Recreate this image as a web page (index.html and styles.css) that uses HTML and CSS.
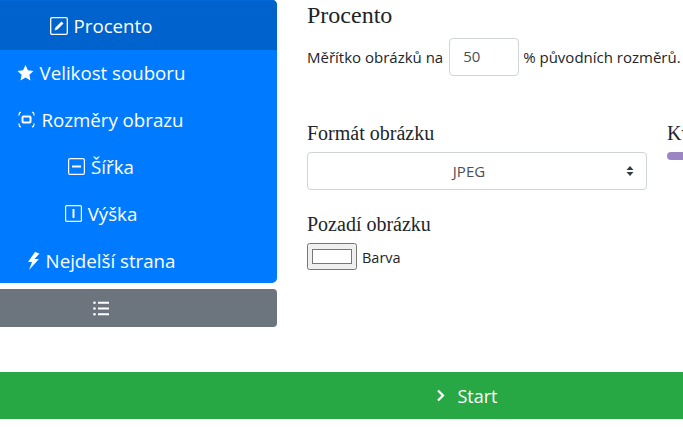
FILE: index.html
```html
<!DOCTYPE html>
<html lang="cs">
  <head>
    <meta charset="UTF-8" />
    <meta name="viewport" content="width=device-width, initial-scale=1.0" />
    <title>Procento</title>
    <link rel="stylesheet" href="styles.css">
  </head>
  <body>
    <div class="top">
      <aside class="side">
        <nav class="menu">
          <a class="item active" href="#">
            <svg class="ico" width="18" height="18" viewBox="0 0 18 18" fill="none" stroke="currentColor"><rect x=".7" y=".7" width="16.600" height="16.600" rx="1.200" stroke-width="1.300"/><path d="M4.500 13.500l1-3 6-6 2 2-6 6z" fill="currentColor" stroke="none"/></svg>
            Procento
          </a>
          <a class="item" href="#">
            <svg class="ico" width="17" height="16" viewBox="0 0 17 16" fill="currentColor"><path d="M8.500 0l2.400 5.200 5.600.7-4.100 3.900 1.100 5.600-5-2.800-5 2.800 1.100-5.600L.5 5.900l5.600-.7z"/></svg>
            Velikost souboru
          </a>
          <a class="item" href="#">
            <svg class="ico" width="17" height="17" viewBox="0 0 17 17" fill="none" stroke="currentColor" stroke-width="1.200"><path d="M1 4.500V3.500Q1 1.500 3 1M14 1Q16 1.500 16 3.500V4.500M16 12.500v1q0 2-2 2.500M3 16Q1 15.500 1 13.500V12.500"/><rect x="4.500" y="5.500" width="8" height="6" rx="1" stroke-width="2"/></svg>
            Rozměry obrazu
          </a>
          <a class="item" href="#">
            <svg class="ico" width="17" height="17" viewBox="0 0 17 17" fill="none" stroke="currentColor"><rect x=".6" y=".6" width="15.800" height="15.800" rx="1.500" stroke-width="1.200"/><path d="M4 8.500h9" stroke-width="2"/></svg>
            Šířka
          </a>
          <a class="item" href="#">
            <svg class="ico" width="17" height="17" viewBox="0 0 17 17" fill="none" stroke="currentColor"><rect x=".6" y=".6" width="15.800" height="15.800" rx="1" stroke-width="1.200"/><path d="M8.500 4v9" stroke-width="2"/></svg>
            Výška
          </a>
          <a class="item" href="#">
            <svg class="ico" width="13" height="18" viewBox="0 0 13 18" fill="currentColor"><path d="M8 0L1 10h4l-3 8 10-11H7.500L12.500 1.500z"/></svg>
            Nejdelší strana
          </a>
        </nav>
        <button class="toggle" type="button" aria-label="Seznam">
          <svg width="16" height="15" viewBox="0 0 16 15" fill="currentColor"><circle cx="1.500" cy="1.800" r="1.300"/><circle cx="1.500" cy="7.500" r="1.300"/><circle cx="1.500" cy="13.200" r="1.300"/><path d="M5 .8h11v2H5zM5 6.500h11v2H5zM5 12.200h11v2H5z"/></svg>
        </button>
      </aside>

      <main class="content">
        <h2 class="title">Procento</h2>
        <div class="scale">
          <label class="scale-label" for="percent">Měřítko obrázků na</label>
          <input class="num" id="percent" type="text" value="50" />
          <span>% původních rozměrů.</span>
        </div>
        <div class="cols">
          <div class="col-format">
            <h3 class="sub">Formát obrázku</h3>
            <div class="select">JPEG
              <svg class="arrows" width="8" height="10" viewBox="0 0 8 10" fill="#343a40"><path d="M4 0l3.500 4H.5zM4 10L.5 6h7z"/></svg>
            </div>
            <h3 class="sub second">Pozadí obrázku</h3>
            <div class="bg">
              <input class="color" type="color" value="#ffffff" />
              <span class="bg-label">Barva</span>
            </div>
          </div>
          <div class="col-quality">
            <h3 class="sub">Kvalita</h3>
            <div class="slider"></div>
          </div>
        </div>
      </main>
    </div>
    <button class="start" type="button">
      <svg width="9" height="13" viewBox="0 0 9 13" fill="none" stroke="currentColor" stroke-width="2.200"><path d="M2 1.500l5 5-5 5"/></svg>
      Start
    </button>
  </body>
</html>
```
FILE: styles.css
```css
html, body {
  margin: 0;
  padding: 0;
  height: 100%;
  overflow: hidden;
}
body {
  width: 683px;
  font-family: "Open Sans", "Noto Sans", sans-serif;
  font-size: 15px;
  color: #212529;
  background-color: white;
}
.top {
  display: flex;
  height: 372px;
}
.side {
  width: 277px;
  flex-shrink: 0;
}
.menu {
  background-color: #007bff;
  border-radius: 0 5px 5px 0;
  height: 283px;
  overflow: hidden;
}
.item {
  box-sizing: border-box;
  display: flex;
  justify-content: center;
  align-items: center;
  gap: 6px;
  height: 47px;
  padding: 0 75px 2px 0;
  color: white;
  text-decoration: none;
  font-size: 18.700px;
}
.item.active {
  height: 50px;
  padding-bottom: 0;
  background-color: #0062cc;
  border-top: 1px solid #0069d9;
  box-shadow: 3px 0 0 rgba(0, 123, 255, 0.3);
}
.ico {
  flex-shrink: 0;
}
.toggle {
  display: flex;
  justify-content: center;
  align-items: center;
  width: 100%;
  height: 38px;
  margin-top: 6px;
  padding: 0 75px 0 0;
  border: none;
  border-radius: 0 4px 4px 0;
  color: white;
  background-color: #6c757d;
}
.content {
  padding-left: 30px;
  flex: 1;
  min-width: 0;
}
.title {
  font-family: "Liberation Serif", serif;
  font-weight: normal;
  font-size: 24px;
  line-height: 26px;
  margin: 2px 0 10px;
}
.scale {
  display: flex;
  align-items: center;
  gap: 4px;
  white-space: nowrap;
}
.scale-label {
  margin-right: 2px;
}
.num {
  box-sizing: border-box;
  width: 70px;
  height: 38px;
  padding: 0 13px 2px;
  border: 1px solid #ced4da;
  border-radius: 4px;
  font: inherit;
  color: #495057;
}
.cols {
  display: flex;
  gap: 20px;
  margin-top: 44px;
  white-space: nowrap;
}
.col-format {
  width: 340px;
  flex-shrink: 0;
}
.sub {
  font-family: "Liberation Serif", serif;
  font-weight: normal;
  font-size: 20px;
  line-height: 26px;
  margin: 0 0 6px;
}
.sub.second {
  margin-top: 21px;
}
.select {
  position: relative;
  box-sizing: border-box;
  height: 38px;
  padding-right: 16px;
  line-height: 36px;
  text-align: center;
  border: 1px solid #ced4da;
  border-radius: 4px;
  color: #495057;
}
.arrows {
  position: absolute;
  right: 12px;
  top: 13px;
}
.bg {
  display: flex;
  align-items: center;
  gap: 5px;
  margin-top: 3px;
}
.bg-label {
  font-size: 14.500px;
  padding-top: 2px;
}
.color {
  box-sizing: border-box;
  width: 50px;
  height: 27px;
  padding: 1px 2px;
  margin: 0;
}
.slider {
  width: 100px;
  height: 8px;
  margin-top: 4px;
  border-radius: 4px;
  background-color: #9b86c4;
}
.start {
  display: flex;
  justify-content: center;
  align-items: center;
  gap: 12px;
  width: 100%;
  height: 47px;
  padding: 0 0 0 251px;
  border: none;
  color: white;
  background-color: #28a745;
  font-family: inherit;
  font-size: 18px;
}
```
